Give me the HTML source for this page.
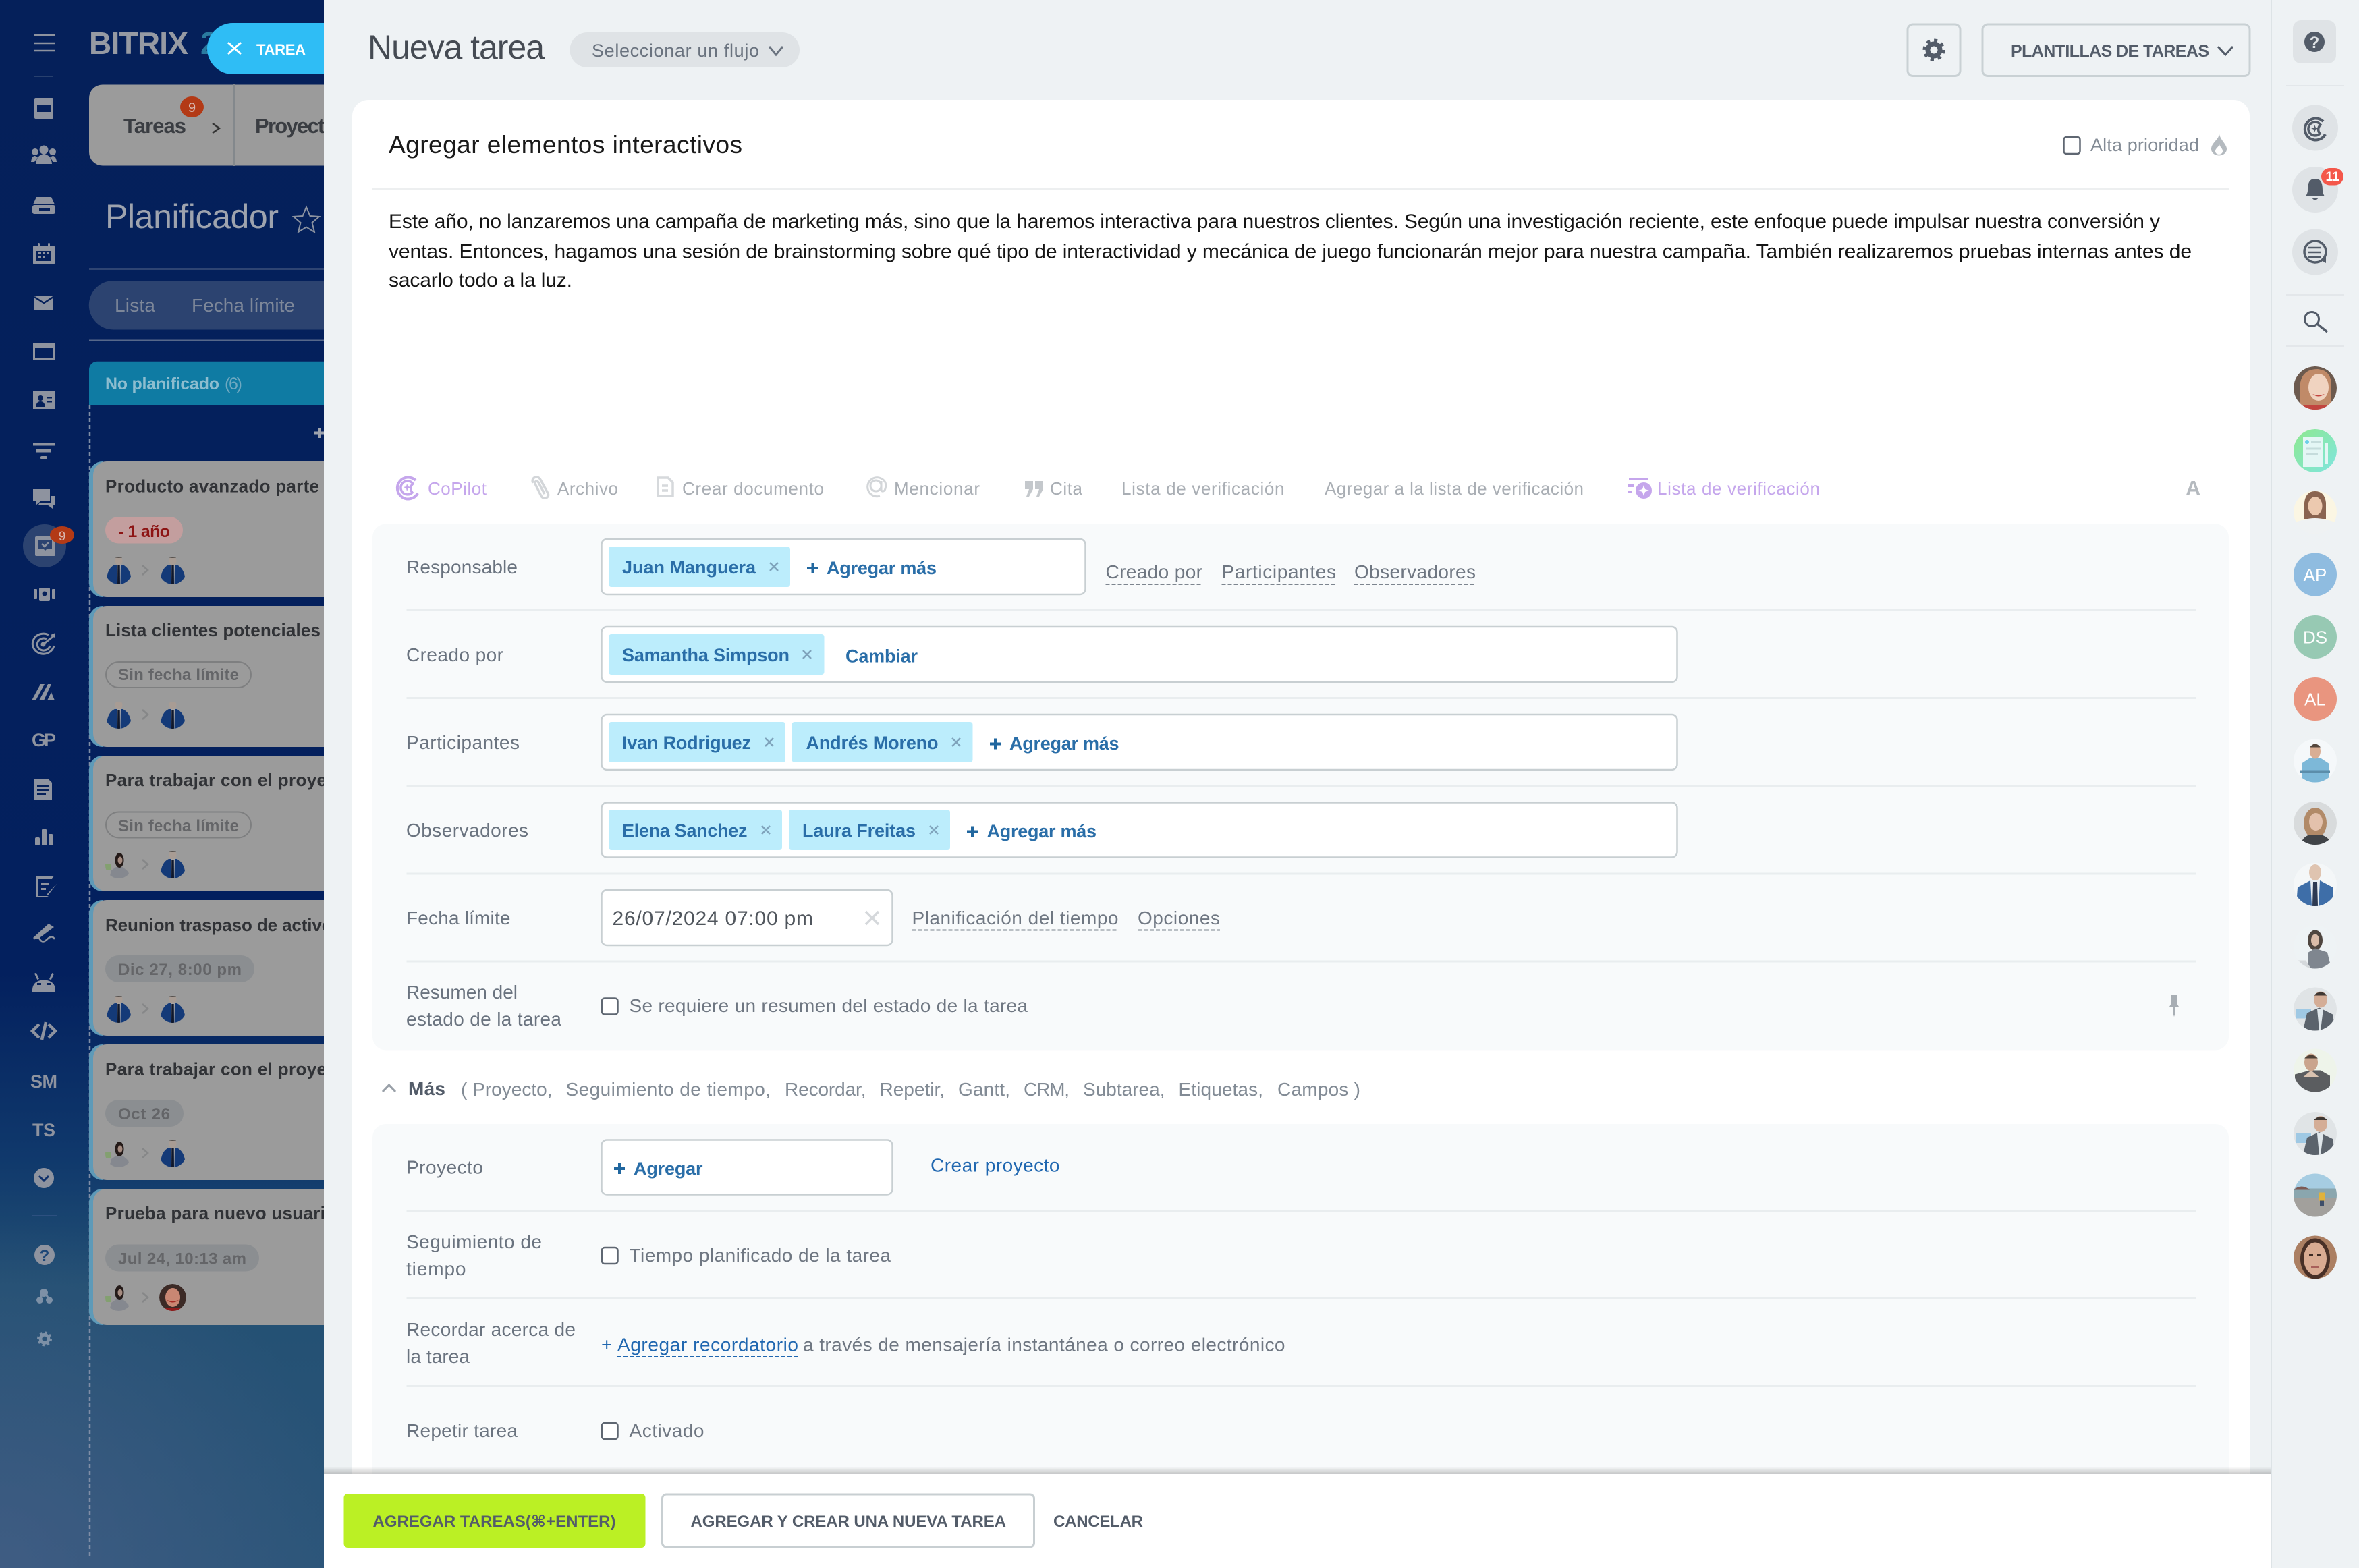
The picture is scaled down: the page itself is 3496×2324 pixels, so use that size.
<!DOCTYPE html>
<html lang="es"><head><meta charset="utf-8"><title>Nueva tarea</title>
<style>
html,body{margin:0;padding:0;width:3496px;height:2324px;overflow:hidden;background:#eef2f4}
svg{display:block;font-family:"Liberation Sans","DejaVu Sans",sans-serif}
.lb{font-size:28px;fill:#6a737f}
.cn{font-size:27px;font-weight:700;fill:#2a6ea8}
.bl{font-size:27px;font-weight:700;fill:#2a6ea8}
.gl{font-size:28px;fill:#6f7782}
.tb{font-size:26px;fill:#a9aeb4}
.bd{font-size:30px;fill:#151515}
.mr{font-size:28px;fill:#828b95}
.bt{font-size:24px;font-weight:700;fill:#535c69}
.ct{font-size:26px;font-weight:700;fill:#303236}
.pt{font-size:24px;font-weight:700;fill:#646568}
.inp{fill:#fff;stroke:#c8cfd2;stroke-width:2.5}
.chip{fill:#bcedfc}
.sep{stroke:#e9edef;stroke-width:3}
.dash{stroke:#7d858f;stroke-width:2;stroke-dasharray:6 3}
.x{stroke:#7fa3bb;stroke-width:2.5;fill:none}
.cb{fill:#fff;stroke:#5f6772;stroke-width:2.5}
.pl{stroke:#21679f;stroke-width:4}
.ic{fill:#8e939f}
.nv{fill:#05205a}
.av{fill:#fff;font-size:26px;text-anchor:middle}
</style></head><body>
<svg width="3496" height="2324" viewBox="0 0 3496 2324" xmlns="http://www.w3.org/2000/svg">
<defs>
<linearGradient id="bg" x1="0" y1="0" x2="0" y2="1"><stop offset="0" stop-color="#05205a"/><stop offset=".62" stop-color="#03205e"/><stop offset=".74" stop-color="#10396c"/><stop offset=".82" stop-color="#235073"/><stop offset="1" stop-color="#2b5579"/></linearGradient>
<radialGradient id="lft" gradientUnits="userSpaceOnUse" cx="0" cy="2324" r="520"><stop offset="0" stop-color="#4a6088" stop-opacity=".65"/><stop offset="1" stop-color="#4a6088" stop-opacity="0"/></radialGradient>
<linearGradient id="sh" x1="0" y1="0" x2="0" y2="1"><stop offset="0" stop-color="#000" stop-opacity="0"/><stop offset="1" stop-color="#000" stop-opacity=".2"/></linearGradient>
<linearGradient id="grn" x1="0" y1="0" x2="1" y2="1"><stop offset="0" stop-color="#8ee88e"/><stop offset="1" stop-color="#7fe6e0"/></linearGradient>
<clipPath id="c20"><circle cx="0" cy="0" r="20"/></clipPath>
<clipPath id="c32"><circle cx="0" cy="0" r="32"/></clipPath>
<g id="mm"><g clip-path="url(#c20)"><path d="M-18 14Q-17 -4 -6 -9L6 -9Q16 -4 18 9L14 20L-12 20Z" fill="#143a78"/><path d="M-3 -10L3 -10L2.500 20L-2.500 20Z" fill="#a6a8ac"/><path d="M-1.700 -8L1.700 -8L2 20L-2 20Z" fill="#10182c"/><ellipse cx="0" cy="-15" rx="5.500" ry="6.500" fill="#a89c94"/><path d="M-5 -19H5V-20H-5Z" fill="#55504c"/></g></g>
<g id="mw"><g clip-path="url(#c20)"><path d="M-14 20L-11 8L-4 3L6 3L14 10L17 20Z" fill="#85888f"/><ellipse cx="1" cy="-7" rx="6.500" ry="11" fill="#241a18"/><ellipse cx="2" cy="-7" rx="3.500" ry="5.500" fill="#a58b80"/><rect x="-20" y="-2" width="9" height="9" fill="#83a070"/></g></g>
<g id="mr"><g clip-path="url(#c20)"><circle r="20" fill="#3c2a26"/><ellipse cx="0" cy="0" rx="11" ry="14" fill="#c98773"/><path d="M-9 4Q0 11 9 4Q0 7 -9 4Z" fill="#a52a24"/><rect x="-20" y="15" width="40" height="6" fill="#8e1c1c"/></g></g>
<g id="cop" fill="none" stroke="currentColor"><path d="M12 -11A16 16 0 1 0 15 8" stroke-width="4"/><path d="M8 -6A10 10 0 1 0 7 7A9 9 0 0 1 8 -6Z" stroke-width="3.500"/><path d="M-1 -6L1 -2L5 -1L1 1L-1 5L-2 1L-6 -1L-2 -2Z" fill="currentColor" stroke="none"/></g>
<g id="gear"><circle r="9" fill="none" stroke="currentColor" stroke-width="7"/><circle r="14" fill="none" stroke="currentColor" stroke-width="5" stroke-dasharray="5 6"/></g>
</defs>

<!-- left background -->
<rect width="480" height="2324" fill="url(#bg)"/>
<rect y="1700" width="480" height="624" fill="url(#lft)"/>

<!-- nav rail -->
<g stroke="#8e939f" stroke-width="2.500"><path d="M50 52H82M50 64H82M50 75H82"/></g>
<path d="M50 113H78" stroke="#28406e" stroke-width="2"/>
<g class="ic">
<rect x="51" y="145" width="28" height="31" rx="2"/><rect class="nv" x="55" y="156" width="21" height="10"/>
<g><circle cx="65" cy="222" r="6.500"/><path d="M53 243Q54 230 65 228Q76 230 77 243Z"/><circle cx="52" cy="225" r="5"/><path d="M46 240Q47 231 52 231L56 233L51 240Z"/><circle cx="78" cy="225" r="5"/><path d="M84 240Q83 231 78 231L74 233L79 240Z"/></g>
<path d="M54 292H76L81 303H49Z"/><rect x="48" y="304" width="34" height="13" rx="3"/><rect class="nv" x="58" y="309" width="16" height="3.500"/>
<rect x="49" y="364" width="32" height="28" rx="2"/><rect class="nv" x="54" y="372" width="22" height="15"/><rect x="57" y="374" width="4" height="3"/><rect x="63" y="374" width="4" height="3"/><rect x="69" y="374" width="4" height="3"/><rect x="57" y="380" width="4" height="3"/><rect x="63" y="380" width="4" height="3"/><rect x="56" y="360" width="3" height="8" rx="1.500"/><rect x="71" y="360" width="3" height="8" rx="1.500"/>
<rect x="51" y="438" width="28" height="22" rx="1"/>
<path d="M49 508H81V534H49Z M52 516V531H78V516Z" fill-rule="evenodd"/>
<path d="M49 580H81V606H49Z"/><g class="nv"><circle cx="60" cy="590" r="4"/><path d="M53 603Q54 595 60 595Q66 595 67 603Z"/><rect x="69" y="588" width="8" height="2.500"/><rect x="69" y="594" width="8" height="2.500"/></g>
<rect x="49" y="656" width="32" height="4.500"/><rect x="54" y="666" width="22" height="4.500"/><rect x="60" y="676" width="10" height="4.500" rx="2"/>
<path d="M49 725H74V743H60L53 749V743H49Z"/><path d="M81 735V748H78V754L70 748H57L59 745H76V735Z"/>
</g>
<path d="M51 440L65 449L79 440" fill="none" stroke="#05205a" stroke-width="2.500"/>
<circle cx="66" cy="809" r="32" fill="#2c4370"/>
<g class="ic"><rect x="52" y="795" width="30" height="29" rx="2"/></g>
<path d="M57 800H77V813H70L67 816L64 813H57Z" fill="#2c4370"/><path d="M62 806L66 810L72 804" stroke="#8e939f" stroke-width="2.500" fill="none"/>
<ellipse cx="92" cy="793" rx="18" ry="13" fill="#b33a16"/><text x="92" y="801" font-size="19" fill="#d8b8b0" text-anchor="middle">9</text>
<g class="ic">
<rect x="50" y="873" width="5" height="15" rx="1"/><rect x="58" y="871" width="16" height="20" rx="2"/><rect x="77" y="873" width="5" height="15" rx="1"/><circle class="nv" cx="66" cy="880" r="3.500"/>
</g>
<g fill="none" stroke="#8e939f" stroke-width="3"><path d="M72 941A16 15 0 1 0 80 957"/><path d="M69 947A9.500 9 0 1 0 74 957"/></g><circle cx="64" cy="955" r="3.500" class="ic"/><path d="M64 955L79 943" stroke="#8e939f" stroke-width="3"/><path d="M75 941L82 938L81 945Z" class="ic"/>
<g class="ic">
<path d="M47 1038L60 1014H66L53 1038Z"/><path d="M58 1038L71 1014H76L65 1038Z"/><path d="M70 1038L76 1026L81 1038Z"/>
<path d="M50 1155H72L77 1160V1185H50Z"/><g class="nv"><rect x="55" y="1164" width="18" height="2.500"/><rect x="55" y="1170" width="18" height="2.500"/><rect x="55" y="1176" width="13" height="2.500"/></g>
<rect x="52" y="1241" width="7" height="12" rx="2"/><rect x="62" y="1229" width="7" height="24" rx="1"/><rect x="72" y="1236" width="6" height="17" rx="1"/>
<path d="M53 1298H80L77 1303H57V1328H72L70 1329H53Z"/><path d="M61 1309H72V1312H61ZM61 1316H68V1319H61Z"/><path d="M68 1327L82 1312L84 1310L71 1327Z"/>
<path d="M49 1390L72 1369L80 1374L56 1392Z"/>
<path d="M48 1470Q47 1456 60 1453H70Q83 1456 82 1470Z"/><rect x="53" y="1442" width="3" height="10" transform="rotate(-25 54 1447)"/><rect x="75" y="1442" width="3" height="10" transform="rotate(25 76 1447)"/>
</g>
<path d="M50 1392Q55 1385 59 1392T70 1392T81 1392" stroke="#8e939f" stroke-width="2.500" fill="none"/>
<rect x="55" y="1457" width="6" height="3" class="nv"/><rect x="69" y="1457" width="6" height="3" class="nv"/>
<g fill="none" stroke="#8e939f" stroke-width="4.500"><path d="M58 1518L48 1528L58 1538"/><path d="M72 1518L82 1528L72 1538"/><path d="M68 1515L62 1541"/></g>
<text x="47" y="1106" font-size="27" font-weight="700" fill="#8e939f" textLength="36">GP</text>
<text x="45" y="1612" font-size="27" font-weight="700" fill="#8e939f" textLength="40">SM</text>
<text x="48" y="1684" font-size="27" font-weight="700" fill="#8e939f" textLength="34">TS</text>
<circle cx="65" cy="1746" r="15" fill="#8e939f"/><path d="M58 1743L65 1750L72 1743" fill="none" stroke="#10306a" stroke-width="3"/>
<path d="M47 1802H84" stroke="#2d5080" stroke-width="2"/>
<circle cx="66" cy="1860" r="15" fill="#8e939f"/><text x="66" y="1869" font-size="24" font-weight="700" fill="#1d4677" text-anchor="middle">?</text>
<g fill="#7d90a6"><circle cx="65" cy="1916" r="6"/><circle cx="59" cy="1927" r="5"/><circle cx="73" cy="1927" r="5"/></g><path d="M63 1917L59 1926M67 1917L73 1926" stroke="#7d90a6" stroke-width="3"/>
<use href="#gear" x="66" y="1984" color="#7d90a6" transform="translate(22 661) scale(.667)"/>

<!-- logo -->
<text x="132" y="80" font-size="46" font-weight="700" fill="#969aa3" textLength="147">BITRIX</text>
<text x="297" y="80" font-size="46" font-weight="700" fill="#2a7a9f">2</text>

<!-- tabs -->
<path d="M152 125.500H480V245.500H152A20 20 0 0 1 132 225.500V145.500A20 20 0 0 1 152 125.500Z" fill="#9b9b9b"/>
<rect x="345" y="125" width="3" height="121" fill="#83888c"/>
<text x="183" y="197" font-size="31" font-weight="700" fill="#3a3d42" textLength="93">Tareas</text>
<ellipse cx="284.500" cy="158.500" rx="17.500" ry="15.500" fill="#b33a16"/><text x="284.500" y="166" font-size="20" fill="#d8b8b0" text-anchor="middle">9</text>
<path d="M315 183L325 190L315 197" fill="none" stroke="#333" stroke-width="2.500"/>
<text x="378" y="197" font-size="31" font-weight="700" fill="#3a3d42" textLength="136">Proyectos</text>

<text x="156" y="338" font-size="50" fill="#9ea3ae" textLength="257">Planificador</text>
<path d="M454 307L459.500 320L473 321L462.500 330L466 344L454 336.500L442 344L445.500 330L435 321L448.500 320Z" fill="none" stroke="#8b92a0" stroke-width="2"/>
<path d="M132 398.500H480M132 504.500H480" stroke="#57688a" stroke-width="2"/>
<path d="M168 416H480V488.500H168A36 36 0 0 1 168 416Z" fill="#2c4370"/>
<text x="170" y="462" font-size="28" fill="#7d8799" textLength="60">Lista</text>
<text x="284" y="462" font-size="28" fill="#7d8799" textLength="153">Fecha límite</text>

<!-- column -->
<path d="M144 535.700H480V600H132V547.700A12 12 0 0 1 144 535.700Z" fill="#0f7ba3"/>
<text x="156" y="577" font-size="25" font-weight="700" fill="#8dbdcf" textLength="169">No planificado</text>
<text x="333" y="577" font-size="25" fill="#6fa9c1" textLength="26">(6)</text>
<path d="M466 641.500H480M473 634V649" stroke="#9ea3ae" stroke-width="4"/>
<path d="M133 600V2310" stroke="#7f8da6" stroke-width="2.500" stroke-dasharray="6 4"/>

<!-- cards -->
<g id="cards">
<g fill="#5e9ab8"><path d="M132 704A20 20 0 0 1 152 684V885A20 20 0 0 1 132 865Z"/><path d="M132 918A20 20 0 0 1 152 898V1107A20 20 0 0 1 132 1087Z"/><path d="M132 1140A20 20 0 0 1 152 1120V1321A20 20 0 0 1 132 1301Z"/><path d="M132 1354A20 20 0 0 1 152 1334V1535A20 20 0 0 1 132 1515Z"/><path d="M132 1568A20 20 0 0 1 152 1548V1749A20 20 0 0 1 132 1729Z"/><path d="M132 1782A20 20 0 0 1 152 1762V1964A20 20 0 0 1 132 1944Z"/></g>
<g fill="#9b9b9b"><path d="M158 684H480V885H158A20 20 0 0 1 138 865V704A20 20 0 0 1 158 684Z"/><path d="M158 898H480V1107H158A20 20 0 0 1 138 1087V918A20 20 0 0 1 158 898Z"/><path d="M158 1120H480V1321H158A20 20 0 0 1 138 1301V1140A20 20 0 0 1 158 1120Z"/><path d="M158 1334H480V1535H158A20 20 0 0 1 138 1515V1354A20 20 0 0 1 158 1334Z"/><path d="M158 1548H480V1749H158A20 20 0 0 1 138 1729V1568A20 20 0 0 1 158 1548Z"/><path d="M158 1762H480V1964H158A20 20 0 0 1 138 1944V1782A20 20 0 0 1 158 1762Z"/></g>
<text class="ct" x="156" y="729.500" textLength="317">Producto avanzado parte</text>
<text class="ct" x="156" y="943" textLength="319">Lista clientes potenciales</text>
<text class="ct" x="156" y="1165" textLength="368">Para trabajar con el proyecto</text>
<text class="ct" x="156" y="1380" textLength="351">Reunion traspaso de activos</text>
<text class="ct" x="156" y="1593.500" textLength="368">Para trabajar con el proyecto</text>
<text class="ct" x="156" y="1807" textLength="342">Prueba para nuevo usuario</text>
<rect x="156" y="766" width="115" height="39.500" rx="19.700" fill="#c39e9e"/><text x="175.500" y="796" textLength="76.500" fill="#8d1414" font-weight="700" font-size="25">- 1 año</text>
<g fill="none" stroke="#7e7f80" stroke-width="2"><rect x="157" y="981" width="215" height="38" rx="19"/><rect x="157" y="1203.500" width="215" height="38" rx="19"/></g>
<text class="pt" x="175" y="1008" textLength="179">Sin fecha límite</text>
<text class="pt" x="175" y="1232" textLength="179">Sin fecha límite</text>
<g fill="#8b8e91"><rect x="156" y="1416" width="221" height="40" rx="20"/><rect x="156" y="1630" width="116" height="40" rx="20"/><rect x="156" y="1844.500" width="228" height="40" rx="20"/></g>
<text class="pt" x="175" y="1445" textLength="183">Dic 27, 8:00 pm</text><text class="pt" x="175" y="1659" textLength="77">Oct 26</text><text class="pt" x="175" y="1873.500" textLength="190">Jul 24, 10:13 am</text>
<use href="#mm" x="176" y="846"/><use href="#mm" x="256" y="846"/>
<use href="#mm" x="176" y="1060"/><use href="#mm" x="256" y="1060"/>
<use href="#mw" x="176" y="1282"/><use href="#mm" x="256" y="1282"/>
<use href="#mm" x="176" y="1496"/><use href="#mm" x="256" y="1496"/>
<use href="#mw" x="176" y="1710"/><use href="#mm" x="256" y="1710"/>
<use href="#mw" x="176" y="1923"/><use href="#mr" x="256" y="1923"/>
<g fill="none" stroke="#868788" stroke-width="2.500"><path d="M211 838L219 845L211 852"/><path d="M211 1052L219 1059L211 1066"/><path d="M211 1274L219 1281L211 1288"/><path d="M211 1488L219 1495L211 1502"/><path d="M211 1702L219 1709L211 1716"/><path d="M211 1916L219 1923L211 1930"/></g>
</g>

<!-- tarea tag -->
<path d="M345 34H480V110H345A38 38 0 0 1 345 34Z" fill="#2fbdf5"/>
<path d="M338 63L357 80M357 63L338 80" stroke="#fff" stroke-width="3"/>
<text x="380" y="81" font-size="22" font-weight="700" fill="#fff" textLength="73">TAREA</text>

<!-- slider panel -->
<rect x="480" y="0" width="2885" height="2324" fill="#eef2f4"/>
<rect x="3365" y="0" width="2" height="2324" fill="#dde3e6"/>

<text x="545" y="87" font-size="50" fill="#454b53" textLength="262">Nueva tarea</text>
<rect x="844.500" y="48" width="340.500" height="52" rx="26" fill="#dfe3e6"/>
<text x="877" y="84" font-size="27" fill="#6a737f" textLength="248">Seleccionar un flujo</text>
<path d="M1140 69L1150 81L1160 69" fill="none" stroke="#6a737f" stroke-width="3"/>

<rect x="2827" y="36" width="78" height="76.500" rx="8" fill="none" stroke="#c9d1d4" stroke-width="3"/>
<g color="#535c69"><use href="#gear" x="2866" y="74"/></g>
<rect x="2938" y="36" width="396" height="76.500" rx="8" fill="none" stroke="#c9d1d4" stroke-width="3"/>
<text x="2980" y="84" font-size="25" font-weight="700" fill="#535c69" textLength="294">PLANTILLAS DE TAREAS</text>
<path d="M3287 69L3298 81L3309 69" fill="none" stroke="#535c69" stroke-width="3"/>

<!-- card -->
<rect x="522" y="148" width="2812" height="2100" rx="24" fill="#fff"/>
<text x="576" y="227" font-size="37" fill="#1a1a1a" textLength="524">Agregar elementos interactivos</text>
<rect x="3058.500" y="203" width="24" height="25" rx="4" fill="#fff" stroke="#5f6772" stroke-width="2.500"/>
<text x="3098" y="224" font-size="27" fill="#838b95" textLength="161">Alta prioridad</text>
<path d="M3289 199C3291 208 3300 214 3300 221A11.500 9.500 0 0 1 3277 221C3277 212 3287 208 3289 199Z" fill="#b4babf"/><path d="M3289 214C3290 218 3294 220 3294 224A5.500 5 0 0 1 3283 224C3283 220 3288 218 3289 214Z" fill="#fff"/>
<path d="M552 280.500H3303" stroke="#edeff0" stroke-width="3"/>
<text class="bd" x="576" y="338" textLength="2625">Este año, no lanzaremos una campaña de marketing más, sino que la haremos interactiva para nuestros clientes. Según una investigación reciente, este enfoque puede impulsar nuestra conversión y</text>
<text class="bd" x="576" y="382.500" textLength="2672">ventas. Entonces, hagamos una sesión de brainstorming sobre qué tipo de interactividad y mecánica de juego funcionarán mejor para nuestra campaña. También realizaremos pruebas internas antes de</text>
<text class="bd" x="576" y="425" textLength="272">sacarlo todo a la luz.</text>

<!-- toolbar -->
<g color="#c5a6ec" transform="translate(604 723)"><use href="#cop"/></g>
<text class="tb" x="634" y="733" textLength="87" style="fill:#c5a6ec">CoPilot</text>
<path d="M790 716C786 708 797 703 801 711L812 731C815 738 805 741 802 735L793 717C792 713 796 712 798 715L807 732" fill="none" stroke="#d3d6d9" stroke-width="3.500"/>
<text class="tb" x="826" y="733" textLength="90">Archivo</text>
<path d="M975 708H990L997 715V735H975Z" fill="none" stroke="#d6d9dc" stroke-width="3.500"/><path d="M981 720H990M981 727H990" stroke="#d6d9dc" stroke-width="3.500"/>
<text class="tb" x="1011" y="733" textLength="210">Crear documento</text>
<circle cx="1298" cy="720" r="8" fill="none" stroke="#d3d6d9" stroke-width="3"/><path d="M1306 713V725Q1306 730 1311 727Q1314 720 1312 715A14 14 0 1 0 1304 735" fill="none" stroke="#d3d6d9" stroke-width="3"/>
<text class="tb" x="1325" y="733" textLength="127">Mencionar</text>
<path d="M1519 713H1531V725L1525 736H1521L1525 725H1519ZM1534 713H1546V725L1540 736H1536L1540 725H1534Z" fill="#c4c8cc"/>
<text class="tb" x="1556" y="733" textLength="48">Cita</text>
<text class="tb" x="1662" y="733" textLength="241.500">Lista de verificación</text>
<text class="tb" x="1963" y="733" textLength="384">Agregar a la lista de verificación</text>
<g fill="#c5a6ec"><rect x="2414" y="708" width="28" height="4"/><rect x="2412" y="718" width="10" height="4"/><rect x="2412" y="727" width="7" height="4"/></g>
<circle cx="2436" cy="727" r="12" fill="#c5a6ec"/><path d="M2436 719L2438 725L2444 727L2438 729L2436 735L2434 729L2428 727L2434 725Z" fill="#fff"/>
<text class="tb" x="2456" y="733" textLength="241" style="fill:#c5a6ec">Lista de verificación</text>
<text x="3239" y="734" font-size="31" font-weight="700" fill="#b5babf" textLength="23">A</text>

<!-- panel 1 -->
<rect x="552" y="776.500" width="2751" height="780" rx="20" fill="#f8fafb"/>
<path class="sep" d="M602.500 904.500H3255M602.500 1034.500H3255M602.500 1164.500H3255M602.500 1295H3255M602.500 1425H3255"/>

<text class="lb" x="602" y="850" textLength="165">Responsable</text>
<rect class="inp" x="891.500" y="799" width="717" height="82" rx="8"/>
<rect class="chip" x="902" y="810" width="269" height="60" rx="4"/>
<text class="cn" x="922" y="850" textLength="198">Juan Manguera</text>
<path class="x" d="M1141 834L1153 846M1153 834L1141 846"/>
<path class="pl" d="M1196 842H1213M1204.500 834V850"/>
<text class="bl" x="1225" y="851" textLength="163">Agregar más</text>
<text class="gl" x="1638.500" y="857" textLength="143.500">Creado por</text><path class="dash" d="M1638.500 866H1782"/>
<text class="gl" x="1810.500" y="857" textLength="169.500">Participantes</text><path class="dash" d="M1810.500 866H1980"/>
<text class="gl" x="2007" y="857" textLength="180">Observadores</text><path class="dash" d="M2007 866H2187"/>

<text class="lb" x="602" y="980" textLength="144">Creado por</text>
<rect class="inp" x="891.500" y="929" width="1594" height="82" rx="8"/>
<rect class="chip" x="902" y="940" width="319.500" height="60" rx="4"/>
<text class="cn" x="922" y="980" textLength="248">Samantha Simpson</text>
<path class="x" d="M1190 964L1202 976M1202 964L1190 976"/>
<text class="bl" x="1253" y="981.500" textLength="107">Cambiar</text>

<text class="lb" x="602" y="1110" textLength="168">Participantes</text>
<rect class="inp" x="891.500" y="1059" width="1594" height="82" rx="8"/>
<rect class="chip" x="902" y="1070" width="262" height="60" rx="4"/>
<text class="cn" x="922" y="1110" textLength="191">Ivan Rodriguez</text>
<path class="x" d="M1134 1094L1146 1106M1146 1094L1134 1106"/>
<rect class="chip" x="1173.500" y="1070" width="268" height="60" rx="4"/>
<text class="cn" x="1194.500" y="1110" textLength="196">Andrés Moreno</text>
<path class="x" d="M1411 1094L1423 1106M1423 1094L1411 1106"/>
<path class="pl" d="M1467 1102.500H1483M1475 1094.500V1110.500"/>
<text class="bl" x="1496" y="1111" textLength="162.500">Agregar más</text>

<text class="lb" x="602" y="1240" textLength="181">Observadores</text>
<rect class="inp" x="891.500" y="1189.500" width="1594" height="81" rx="8"/>
<rect class="chip" x="902" y="1200" width="257" height="60" rx="4"/>
<text class="cn" x="922" y="1240" textLength="185.500">Elena Sanchez</text>
<path class="x" d="M1129 1224L1141 1236M1141 1224L1129 1236"/>
<rect class="chip" x="1169" y="1200" width="239" height="60" rx="4"/>
<text class="cn" x="1189" y="1240" textLength="168">Laura Freitas</text>
<path class="x" d="M1378 1224L1390 1236M1390 1224L1378 1236"/>
<path class="pl" d="M1433 1232.500H1449M1441 1224.500V1240.500"/>
<text class="bl" x="1462.500" y="1241" textLength="162.500">Agregar más</text>

<text class="lb" x="602" y="1370" textLength="154.500">Fecha límite</text>
<rect class="inp" x="891.500" y="1319" width="431" height="82" rx="8"/>
<text x="907.500" y="1371" font-size="30" fill="#50565d" textLength="297.500">26/07/2024 07:00 pm</text>
<path d="M1283 1351L1302 1370M1302 1351L1283 1370" stroke="#d5d8db" stroke-width="3.500"/>
<text class="gl" x="1351.500" y="1370" textLength="306">Planificación del tiempo</text><path class="dash" d="M1351.500 1378.500H1657.500"/>
<text class="gl" x="1686" y="1370" textLength="122">Opciones</text><path class="dash" d="M1686 1378.500H1808"/>

<text class="lb" x="602" y="1480" textLength="165">Resumen del</text>
<text class="lb" x="602" y="1520" textLength="230">estado de la tarea</text>
<rect class="cb" x="892" y="1479.500" width="23.500" height="24" rx="4"/>
<text class="gl" x="932.500" y="1500" textLength="590.500">Se requiere un resumen del estado de la tarea</text>
<path d="M3217 1475H3227L3226 1487L3229 1492H3215L3218 1487ZM3221 1492H3223V1504L3222 1507L3221 1504Z" fill="#a8aeb4"/>

<!-- mas -->
<path d="M567 1618L576.500 1608L586 1618" fill="none" stroke="#99a0a8" stroke-width="3"/>
<text x="605" y="1623" font-size="28" font-weight="700" fill="#535c69" textLength="55">Más</text>
<text class="mr" x="683" y="1624" textLength="135.500">( Proyecto,</text>
<text class="mr" x="838.500" y="1624" textLength="303.500">Seguimiento de tiempo,</text>
<text class="mr" x="1163" y="1624" textLength="120.500">Recordar,</text>
<text class="mr" x="1303.500" y="1624" textLength="96.500">Repetir,</text>
<text class="mr" x="1420" y="1624" textLength="77">Gantt,</text>
<text class="mr" x="1517" y="1624" textLength="68">CRM,</text>
<text class="mr" x="1605" y="1624" textLength="121.500">Subtarea,</text>
<text class="mr" x="1746.500" y="1624" textLength="125.500">Etiquetas,</text>
<text class="mr" x="1893" y="1624" textLength="123">Campos )</text>

<!-- panel 2 -->
<rect x="552" y="1666" width="2751" height="600" rx="20" fill="#f8fafb"/>
<path class="sep" d="M602.500 1795H3255M602.500 1924.500H3255M602.500 2054.500H3255"/>

<text class="lb" x="602" y="1739.500" textLength="114">Proyecto</text>
<rect class="inp" x="891.500" y="1689.500" width="431" height="81" rx="8"/>
<path class="pl" d="M910 1732H926M918 1724V1740"/>
<text class="bl" x="939" y="1741" textLength="102.500">Agregar</text>
<text x="1379" y="1736.500" font-size="28" fill="#2067b0" textLength="191.500">Crear proyecto</text>

<text class="lb" x="602" y="1850" textLength="201">Seguimiento de</text>
<text class="lb" x="602" y="1890" textLength="88.500">tiempo</text>
<rect class="cb" x="892" y="1849" width="23.500" height="24" rx="4"/>
<text class="gl" x="932.500" y="1870" textLength="387.500">Tiempo planificado de la tarea</text>

<text class="lb" x="602" y="1980" textLength="251">Recordar acerca de</text>
<text class="lb" x="602" y="2020" textLength="94">la tarea</text>
<text x="891" y="2002.500" font-size="28" fill="#2067b0">+</text>
<text x="915" y="2002.500" font-size="28" fill="#2067b0" textLength="268">Agregar recordatorio</text>
<path d="M915 2011H1183" stroke="#2067b0" stroke-width="2" stroke-dasharray="6 3"/>
<text class="gl" x="1190" y="2002.500" textLength="714.500">a través de mensajería instantánea o correo electrónico</text>

<text class="lb" x="602" y="2130" textLength="165">Repetir tarea</text>
<rect class="cb" x="892" y="2109" width="23.500" height="24" rx="4"/>
<text class="gl" x="932.500" y="2130" textLength="111">Activado</text>

<!-- footer -->
<rect x="480" y="2174" width="2885" height="10" fill="url(#sh)"/>
<rect x="480" y="2184" width="2885" height="140" fill="#fff"/>
<rect x="509.500" y="2214" width="447" height="80" rx="6" fill="#bbf024"/>
<text class="bt" x="552.500" y="2263" textLength="360">AGREGAR TAREAS(⌘+ENTER)</text>
<rect x="981.500" y="2215" width="551" height="78" rx="6" fill="#fff" stroke="#c8cfd2" stroke-width="3"/>
<text class="bt" x="1023.500" y="2263" textLength="467.500">AGREGAR Y CREAR UNA NUEVA TAREA</text>
<text class="bt" x="1561" y="2263" textLength="133">CANCELAR</text>

<!-- right strip -->
<rect x="3398" y="30" width="64" height="64" rx="12" fill="#dfe3e6"/>
<circle cx="3430" cy="62" r="15" fill="#535c69"/><text x="3430" y="71" font-size="24" font-weight="700" fill="#dfe3e6" text-anchor="middle">?</text>
<path d="M3388 127H3474M3388 437H3474M3388 513H3474" stroke="#e3e7ea" stroke-width="2"/>
<g fill="#dfe3e6"><circle cx="3431" cy="189.500" r="34"/><circle cx="3431" cy="281" r="34"/><circle cx="3431" cy="373.500" r="34"/></g>
<g color="#535c69" transform="translate(3431 191)"><use href="#cop"/></g>
<path d="M3431 265C3422 265 3420 272 3420 282C3420 286 3418 289 3417 291H3445C3444 289 3442 286 3442 282C3442 272 3440 265 3431 265Z" fill="#535c69"/><path d="M3426 293Q3431 300 3436 293Z" fill="#535c69"/>
<rect x="3440" y="249" width="33" height="25.500" rx="12.700" fill="#f4574a"/><text x="3456.500" y="268" font-size="19" font-weight="700" fill="#fff" text-anchor="middle">11</text>
<circle cx="3431" cy="373" r="16" fill="none" stroke="#535c69" stroke-width="3.500"/><path d="M3440 386L3447 390V380" fill="#535c69"/><path d="M3421 367H3440M3421 374H3440M3421 381H3440" stroke="#535c69" stroke-width="2.500"/>
<circle cx="3426" cy="473" r="10.500" fill="none" stroke="#535c69" stroke-width="3"/><path d="M3434 480L3449 492" stroke="#535c69" stroke-width="3.500"/>

<!-- avatars right -->
<g transform="translate(3431 575)" clip-path="url(#c32)"><circle r="32" fill="#6c5a4e"/><path d="M-22 32V-8Q-18 -28 4 -28Q24 -26 24 -4V22L14 32Z" fill="#c08a68"/><ellipse cx="5" cy="-1" rx="15" ry="20" fill="#f0d3c0"/><path d="M-4 9Q5 16 14 9Q5 12 -4 9Z" fill="#c2453f"/><rect x="-20" y="26" width="44" height="8" fill="#c2453f"/></g>
<g transform="translate(3431 668)" clip-path="url(#c32)"><circle r="32" fill="url(#grn)"/><path d="M-18 -20H12V24H-18Z" fill="#e4f6f5"/><path d="M14 -12H19V20H14Z" fill="#e4f6f5"/><circle cx="-12" cy="-13" r="3" fill="#6dcfe8"/><path d="M-6 -13H8M-14 -3H8M-14 5H4" stroke="#c5dcdc" stroke-width="3"/></g>
<g transform="translate(3431 759)" clip-path="url(#c32)"><circle r="32" fill="#fbf6e3"/><path d="M-16 10V-14Q-14 -31 0 -31Q14 -31 16 -14V10Z" fill="#8a6450"/><ellipse rx="10.500" ry="14" cy="-9" fill="#ecc9af"/><path d="M-32 34V16Q-14 9 0 9Q14 9 32 16V34Z" fill="#eff2f3"/></g>
<circle cx="3431" cy="851.500" r="32" fill="#8fbce0"/><text class="av" x="3431" y="861">AP</text>
<circle cx="3431" cy="944" r="32" fill="#97c9b3"/><text class="av" x="3431" y="953.500">DS</text>
<circle cx="3431" cy="1036" r="32" fill="#e9957f"/><text class="av" x="3431" y="1045.500">AL</text>
<g transform="translate(3431 1127.500)" clip-path="url(#c32)"><circle r="32" fill="#f5f8fa"/><path d="M-20 32V4L-8 -4H8L20 4V32Z" fill="#7db8d8"/><ellipse cy="-14" rx="8" ry="11" fill="#d9ae94"/><path d="M-8 -20Q0 -30 8 -20Z" fill="#54463c"/><path d="M-22 16H22" stroke="#5b8daa" stroke-width="4"/></g>
<g transform="translate(3431 1220)" clip-path="url(#c32)"><circle r="32" fill="#d8dbdc"/><ellipse cy="0" rx="17" ry="23" fill="#b18a68"/><ellipse cx="1" cy="-2" rx="10" ry="13" fill="#e3c1ac"/><path d="M-22 32Q-16 14 0 18Q16 14 26 32Z" fill="#404448"/></g>
<g transform="translate(3431 1311)" clip-path="url(#c32)"><circle r="32" fill="#f4f7f8"/><path d="M-28 32L-26 4L-7 -6H7L26 4L28 32Z" fill="#3e6ea8"/><path d="M-7 -6H7L5 32H-5Z" fill="#e8eef2"/><path d="M-3 -4H3L4 32H-4Z" fill="#2d3a52"/><ellipse cy="-18" rx="9" ry="12" fill="#dfc4b0"/></g>
<g transform="translate(3431 1403.500)" clip-path="url(#c32)"><circle r="32" fill="#eef3f5"/><ellipse cx="0" cy="-10" rx="11" ry="15" fill="#4f4640"/><ellipse cy="-10" rx="6" ry="9" fill="#d9bba8"/><path d="M-10 32V8L0 2L18 8L24 32Z" fill="#7f868f"/><path d="M-32 20L-14 20L-6 32H-32Z" fill="#d5d9dc"/></g>
<g transform="translate(3431 1495.500)" clip-path="url(#c32)"><circle r="32" fill="#e0e4e6"/><rect x="-28" y="0" width="22" height="14" fill="#9fc9e4"/><path d="M-18 32L-12 6L6 -2L26 8L30 32Z" fill="#5b636c"/><path d="M3 0H12L8 32H6Z" fill="#dfe6ea"/><ellipse cx="8" cy="-14" rx="10" ry="12" fill="#d4ad96"/><path d="M-2 -20Q8 -30 18 -20Z" fill="#3f3833"/></g>
<g transform="translate(3431 1586.500)" clip-path="url(#c32)"><circle r="32" fill="#eef4ea"/><path d="M-30 32V6L-8 0H8L22 8V32Z" fill="#5b5d60"/><ellipse cx="-6" cy="-12" rx="10" ry="13" fill="#caa58d"/><path d="M-16 -18Q-6 -28 4 -18Z" fill="#4f4237"/><path d="M-18 10L-6 0L6 10Z" fill="#d9c2b0"/></g>
<g transform="translate(3431 1680)" clip-path="url(#c32)"><circle r="32" fill="#e0e4e6"/><rect x="-28" y="0" width="22" height="14" fill="#9fc9e4"/><path d="M-18 32L-12 6L6 -2L26 8L30 32Z" fill="#5b636c"/><path d="M3 0H12L8 32H6Z" fill="#dfe6ea"/><ellipse cx="8" cy="-14" rx="10" ry="12" fill="#d4ad96"/><path d="M-2 -20Q8 -30 18 -20Z" fill="#3f3833"/></g>
<g transform="translate(3431 1771.500)" clip-path="url(#c32)"><rect x="-32" y="-32" width="64" height="22" fill="#a6cde2"/><rect x="-32" y="-10" width="64" height="14" fill="#8aa6ae"/><rect x="-32" y="4" width="64" height="28" fill="#a2a09c"/><path d="M-32 -8Q-20 -18 -8 -8Z" fill="#7c5a54"/><rect x="6" y="-4" width="8" height="12" fill="#e0b23c"/><rect x="7" y="8" width="6" height="8" fill="#3d4e6a"/></g>
<g transform="translate(3431 1863.500)" clip-path="url(#c32)"><circle r="32" fill="#ab7f62"/><ellipse cy="2" rx="22" ry="30" fill="#483027"/><ellipse cy="2" rx="17" ry="24" fill="#d9ab92"/><path d="M-9 -4H-3M3 -4H9" stroke="#3e2b24" stroke-width="3"/><path d="M-6 14H6" stroke="#a8605a" stroke-width="3"/></g>
</svg>
</body></html>
